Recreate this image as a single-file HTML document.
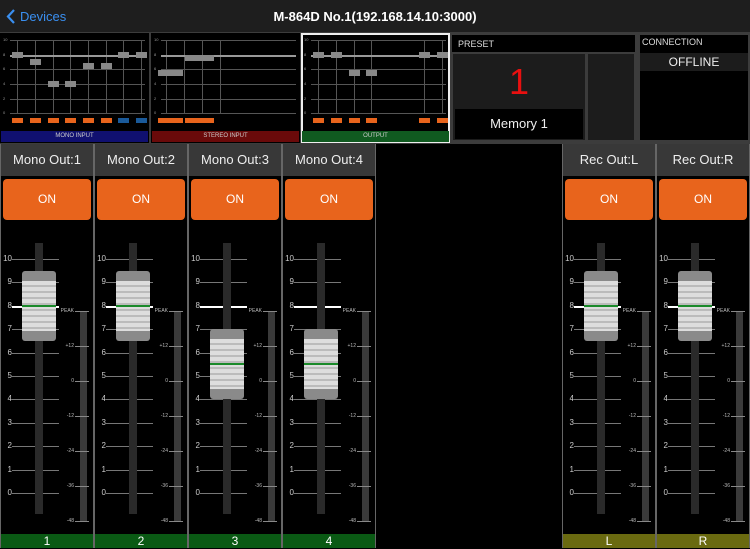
<!DOCTYPE html><html><head><meta charset="utf-8"><style>
*{margin:0;padding:0;box-sizing:border-box}
body{width:750px;height:548px;background:#000;font-family:"Liberation Sans",sans-serif;position:relative;overflow:hidden;color:#fff}
.a{position:absolute}
</style></head><body>
<div class="a" style="left:0;top:0;width:750px;height:32px;background:#1e1e1e"></div>
<svg class="a" style="left:6px;top:9px" width="10" height="15"><path d="M8 1L2 7.5L8 14" stroke="#3a8ff0" stroke-width="2.2" fill="none"/></svg>
<div class="a" style="left:20px;top:9px;font-size:13px;color:#3a8ff0">Devices</div>
<div class="a" style="left:0;width:750px;top:9px;text-align:center;font-size:13px;font-weight:bold">M-864D No.1(192.168.14.10:3000)</div>
<div class="a" style="left:0;top:32px;width:750px;height:112px;background:#3c3c3c"></div>
<div id="g"></div>
<div class="a" style="left:452px;top:35px;width:183px;height:17px;background:#000;font-size:9px;padding:4px 6px;color:#ddd">PRESET</div>
<div class="a" style="left:453px;top:54px;width:132px;height:86px;background:#1c1c1c"></div>
<div class="a" style="left:453px;top:54px;width:132px;text-align:center;font-size:36px;color:#e81010;line-height:56px">1</div>
<div class="a" style="left:455px;top:109px;width:128px;height:30px;background:#000;text-align:center;font-size:13px;line-height:30px;color:#eee">Memory 1</div>
<div class="a" style="left:588px;top:54px;width:46px;height:86px;background:#1c1c1c"></div>
<div class="a" style="left:640px;top:35px;width:108px;height:105px;background:#000"></div>
<div class="a" style="left:642px;top:37px;font-size:9px;color:#ddd">CONNECTION</div>
<div class="a" style="left:640px;top:53px;width:108px;height:18px;background:#1c1c1c;text-align:center;font-size:12px;line-height:18px;color:#eee">OFFLINE</div>
<div id="s"></div>
<script>
var g='',p=[[0,'#101070','MONO INPUT',[8,8,8,8,8,8,8,8],[8,7,4,4,6.5,6.5,8,8]],[151,'#6a0a0a','STEREO  INPUT',[2],[5.5,7.5]],[301,'#105a20','OUTPUT',[0],[8,8,5.5,5.5,8,8]]];
var ys=[40,55,69,84,99,113];
p.forEach(function(q,i){var x=q[0];g+='<div class="a" style="left:'+x+'px;top:33px;width:149px;height:110px;background:#000;'+(i==2?'border:2px solid #eee;':'')+'"></div>';
ys.forEach(function(y,k){g+='<div class="a" style="left:'+(x+10)+'px;top:'+y+'px;width:135px;height:1px;background:#555"></div><div class="a" style="left:'+(x+3)+'px;top:'+(y-3)+'px;font-size:4px;color:#999">'+(10-2*k)+'</div>'});
var xs=i==0?[17,35,53,70,88,106,123,141]:i==1?[15,33,51,69]:[17,35,53,70,123,141];
xs.forEach(function(v){g+='<div class="a" style="left:'+(x+v)+'px;top:40px;width:1px;height:73px;background:#555"></div>'});
g+='<div class="a" style="left:'+(x+10)+'px;top:55px;width:135px;height:2px;background:#999"></div>';
var kx=i==1?[[7,25],[34,29]]:xs.map(function(v){return[v-5,11]});
q[4].forEach(function(v,j){if(!kx[j])return;var y=113-v*7.3-3;g+='<div class="a" style="left:'+(x+kx[j][0])+'px;top:'+y+'px;width:'+kx[j][1]+'px;height:6px;background:#888"></div>';
var off=i==0&&j>=6;g+='<div class="a" style="left:'+(x+kx[j][0])+'px;top:118px;width:'+kx[j][1]+'px;height:5px;background:'+(off?'#1a5a9a':'#e8641c')+'"></div>'});
g+='<div class="a" style="left:'+(x+1)+'px;top:131px;width:147px;height:11px;background:'+q[1]+';font-size:6px;text-align:center;line-height:11px;color:#ccc">'+q[2]+'</div>'});
document.getElementById('g').innerHTML=g;
var s='',ch=[[0,'Mono Out:1','1',8],[94,'Mono Out:2','2',8],[188,'Mono Out:3','3',5.5],[282,'Mono Out:4','4',5.5],[562,'Rec Out:L','L',8],[656,'Rec Out:R','R',8]];
ch.forEach(function(c){var x=c[0],bot=c[2]=='L'||c[2]=='R'?'#6a6a10':'#0a5a14';
s+='<div class="a" style="left:'+x+'px;top:144px;width:94px;height:404px;background:#000;border-left:1px solid #666;border-right:1px solid #666"></div>';
s+='<div class="a" style="left:'+(x+1)+'px;top:144px;width:92px;height:32px;background:#383838;text-align:center;line-height:31px;font-size:13px;color:#eee">'+c[1]+'</div>';
s+='<div class="a" style="left:'+(x+3)+'px;top:179px;width:88px;height:41px;background:#e8641c;border-radius:4px;text-align:center;line-height:41px;font-size:12px;color:#fff">ON</div>';
for(var k=0;k<=10;k++){var y=493-k*23.4;var w=(k==8)?'#fff':'#777';
s+='<div class="a" style="left:'+(x+12)+'px;top:'+Math.round(y)+'px;width:47px;height:'+(k==8?2:1)+'px;background:'+w+'"></div><div class="a" style="left:'+(x+1)+'px;top:'+Math.round(y-5)+'px;width:11px;text-align:right;font-size:8px;color:#ccc">'+k+'</div>'}
s+='<div class="a" style="left:'+(x+35)+'px;top:243px;width:8px;height:271px;background:#2a2a2a"></div>';
var gy=493-c[3]*23.4;s+='<div class="a" style="left:'+(x+22)+'px;top:'+(gy-35)+'px;width:34px;height:70px;background:#8a8a8a;border-radius:3px"></div>';
s+='<div class="a" style="left:'+(x+22)+'px;top:'+(gy-25)+'px;width:34px;height:50px;background:repeating-linear-gradient(#ddd 0 4px,#bbb 4px 6px)"></div>';
s+='<div class="a" style="left:'+(x+22)+'px;top:'+(gy-1)+'px;width:34px;height:2px;background:#1a8a2a"></div>';
s+='<div class="a" style="left:'+(x+80)+'px;top:311px;width:7px;height:210px;background:#3a3a3a"></div>';
['PEAK','+12','0','-12','-24','-36','-48'].forEach(function(t,k){var y=311+k*35;s+='<div class="a" style="left:'+(x+75)+'px;top:'+y+'px;width:14px;height:1px;background:#888"></div><div class="a" style="left:'+(x+54)+'px;top:'+(y-3)+'px;width:20px;text-align:right;font-size:5px;color:#bbb">'+t+'</div>'});
s+='<div class="a" style="left:'+(x+1)+'px;top:534px;width:92px;height:14px;background:'+bot+';text-align:center;font-size:12px;line-height:15px;color:#fff">'+c[2]+'</div>';});
document.getElementById('s').innerHTML=s;
</script></body></html>
